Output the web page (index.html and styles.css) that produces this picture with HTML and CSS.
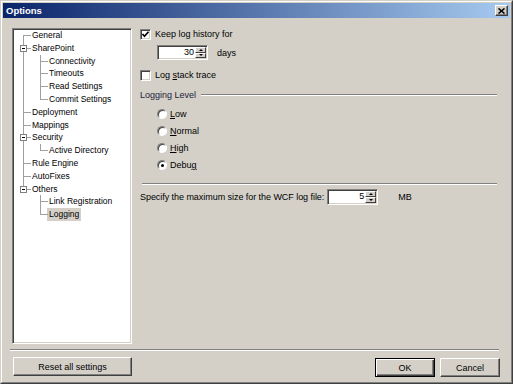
FILE: index.html
```html
<!DOCTYPE html>
<html lang="en">
<head>
  <meta charset="UTF-8">
  <title>Options</title>
  <link rel="stylesheet" href="styles.css">
</head>
<body>
  <div class="window">
    <div class="frame">
      <div class="titlebar">
        <span>Options</span>
        <span class="close">
          <svg width="7" height="6" viewBox="0 0 7 6"><path d="M0.5 0.5 L6.5 5.5 M6.5 0.5 L0.5 5.5" stroke="#000" stroke-width="1.6"/></svg>
        </span>
      </div>

      <div class="client">
        <div class="main">
          <!-- Settings tree -->
          <div class="tree">
            <ul>
              <li><div class="row">General</div></li>
              <li>
                <div class="row"><span class="toggle"></span>SharePoint</div>
                <ul>
                  <li><div class="row">Connectivity</div></li>
                  <li><div class="row">Timeouts</div></li>
                  <li><div class="row">Read Settings</div></li>
                  <li><div class="row">Commit Settings</div></li>
                </ul>
              </li>
              <li><div class="row">Deployment</div></li>
              <li><div class="row">Mappings</div></li>
              <li>
                <div class="row"><span class="toggle"></span>Security</div>
                <ul>
                  <li><div class="row">Active Directory</div></li>
                </ul>
              </li>
              <li><div class="row">Rule Engine</div></li>
              <li><div class="row">AutoFixes</div></li>
              <li>
                <div class="row"><span class="toggle"></span>Others</div>
                <ul>
                  <li><div class="row">Link Registration</div></li>
                  <li><div class="row selected"><span class="label">Logging</span></div></li>
                </ul>
              </li>
            </ul>
          </div>

          <!-- Logging page -->
          <div class="panel">
            <div class="check-row">
              <span class="checkbox">
                <svg width="9" height="9" viewBox="0 0 9 9"><path d="M1.5 4 L3.5 6.2 L7.5 1.8" fill="none" stroke="#000" stroke-width="1.7"/></svg>
              </span>
              <span>Keep log history for</span>
            </div>

            <div class="spin-row">
              <div class="spinner">
                <span class="value">30</span>
                <span class="spin-buttons">
                  <span class="spin-btn up"></span>
                  <span class="spin-btn down"></span>
                </span>
              </div>
              <span>days</span>
            </div>

            <div class="check-row stack">
              <span class="checkbox"></span>
              <span>Log <u>s</u>tack trace</span>
            </div>

            <div class="group-label">Logging Level</div>

            <div class="radio-row first"><span class="radio"></span><span><u>L</u>ow</span></div>
            <div class="radio-row"><span class="radio"></span><span><u>N</u>ormal</span></div>
            <div class="radio-row"><span class="radio"></span><span><u>H</u>igh</span></div>
            <div class="radio-row"><span class="radio checked"></span><span>Debu<u>g</u></span></div>

            <div class="sep"></div>

            <div class="wcf-row">
              <span>Specify the maximum size for the WCF log file:</span>
              <div class="spinner">
                <span class="value">5</span>
                <span class="spin-buttons">
                  <span class="spin-btn up"></span>
                  <span class="spin-btn down"></span>
                </span>
              </div>
              <span class="unit">MB</span>
            </div>
          </div>
        </div>

        <div class="bottom-sep"></div>

        <div class="buttons">
          <button class="btn reset" type="button">Reset all settings</button>
          <span class="spacer"></span>
          <button class="btn default" type="button">OK</button>
          <button class="btn" type="button">Cancel</button>
        </div>
      </div>
    </div>
  </div>
</body>
</html>
```

FILE: styles.css
```css
/* General Styles */
body {
  margin: 0;
  background-color: #d4d0c8;
  font-family: "Liberation Sans", Arial, sans-serif;
  font-size: 9px;
  color: #000;
}

.window {
  width: 513px;
  height: 384px;
  box-sizing: border-box;
  border: 1px solid;
  border-color: #d4d0c8 #404040 #404040 #d4d0c8;
}

.frame {
  height: 100%;
  box-sizing: border-box;
  border: 1px solid;
  border-color: #fff #808080 #808080 #fff;
  padding: 1px;
  display: flex;
  flex-direction: column;
}

/* Title bar */
.titlebar {
  height: 15px;
  flex: none;
  background: linear-gradient(to right, #0a246a, #a6caf0);
  display: flex;
  align-items: center;
  justify-content: space-between;
  padding: 0 2px 0 3px;
  color: #fff;
  font-weight: bold;
  font-size: 9.5px;
}

.close {
  width: 13px;
  height: 11px;
  box-sizing: border-box;
  background-color: #d4d0c8;
  border: 1px solid;
  border-color: #fff #404040 #404040 #fff;
  box-shadow: inset -1px -1px #808080;
  display: flex;
  align-items: center;
  justify-content: center;
}

.close svg {
  display: block;
}

/* Client area */
.client {
  flex: 1;
  display: flex;
  flex-direction: column;
  padding: 10px 9px 0 9px;
}

.main {
  display: flex;
  gap: 8px;
  height: 316px;
}

/* Tree */
.tree {
  width: 120px;
  flex: none;
  box-sizing: border-box;
  background-color: #fff;
  border: 1px solid;
  border-color: #808080 #fff #fff #808080;
  box-shadow: inset 1px 1px #404040, inset -1px -1px #d4d0c8;
  padding: 0 0 0 1px;
  font-size: 8.5px;
}

.tree ul {
  list-style: none;
  margin: 0;
  padding: 0;
}

.tree ul ul {
  margin-left: 17px;
}

.tree li {
  position: relative;
}

.tree li::before {
  content: "";
  position: absolute;
  left: 9px;
  top: 0;
  bottom: 0;
  border-left: 1px solid #a0a0a0;
}

.tree > ul > li:first-child::before {
  top: 6px;
}

.tree li:last-child::before {
  bottom: auto;
  height: 7px;
}

.row {
  position: relative;
  height: 12.8px;
  line-height: 12.8px;
  padding-left: 18px;
  white-space: nowrap;
}

.row::before {
  content: "";
  position: absolute;
  left: 10px;
  top: 6px;
  width: 7px;
  border-top: 1px solid #a0a0a0;
}

.toggle {
  position: absolute;
  left: 6px;
  top: 3px;
  width: 7px;
  height: 7px;
  box-sizing: border-box;
  border: 1px solid #808080;
  background-color: #fff;
  z-index: 1;
}

.toggle::after {
  content: "";
  position: absolute;
  left: 1px;
  top: 2px;
  width: 3px;
  height: 1px;
  background-color: #000;
}

.selected .label {
  display: inline-block;
  background-color: #d4d0c8;
  padding: 0 2px;
  margin-left: -2px;
}

/* Panel */
.panel {
  flex: 1;
  padding-right: 4px;
  display: flex;
  flex-direction: column;
}

.check-row {
  display: flex;
  align-items: center;
  gap: 4px;
  height: 12px;
}

.check-row.stack {
  margin-top: 9px;
}

.checkbox {
  width: 11px;
  height: 11px;
  box-sizing: border-box;
  background-color: #fff;
  border: 1px solid;
  border-color: #808080 #fff #fff #808080;
  box-shadow: inset 1px 1px #404040, inset -1px -1px #d4d0c8;
  display: flex;
  align-items: center;
  justify-content: center;
}

.checkbox svg {
  display: block;
}

.spin-row {
  display: flex;
  align-items: center;
  gap: 9px;
  margin: 5px 0 0 17px;
}

.spinner {
  width: 51px;
  height: 15px;
  box-sizing: border-box;
  display: flex;
  background-color: #fff;
  border: 1px solid;
  border-color: #808080 #fff #fff #808080;
  box-shadow: inset 1px 1px #404040, inset -1px -1px #d4d0c8;
  padding: 1px;
}

.spinner .value {
  flex: 1;
  text-align: right;
  line-height: 11px;
  padding-right: 1px;
}

.spin-buttons {
  width: 11px;
  display: flex;
  flex-direction: column;
}

.spin-btn {
  flex: 1;
  box-sizing: border-box;
  background-color: #d4d0c8;
  border: 1px solid;
  border-color: #fff #404040 #404040 #fff;
  display: flex;
  align-items: center;
  justify-content: center;
}

.spin-btn::after {
  content: "";
  border-left: 2px solid transparent;
  border-right: 2px solid transparent;
}

.spin-btn.up::after {
  border-bottom: 2px solid #000;
}

.spin-btn.down::after {
  border-top: 2px solid #000;
}

.group-label {
  display: flex;
  align-items: center;
  gap: 5px;
  height: 12px;
  margin-top: 8px;
  color: #1c1c3c;
}

.group-label::after {
  content: "";
  flex: 1;
  border-top: 1px solid #808080;
  border-bottom: 1px solid #fff;
}

.radio-row {
  display: flex;
  align-items: center;
  gap: 3px;
  height: 12px;
  margin: 5px 0 0 17px;
}

.radio-row.first {
  margin-top: 7px;
}

.radio {
  position: relative;
  width: 10px;
  height: 10px;
  box-sizing: border-box;
  border-radius: 50%;
  background-color: #fff;
  border: 1px solid;
  border-color: #808080 #fff #fff #808080;
  box-shadow: inset 1px 1px #404040;
}

.radio.checked::after {
  content: "";
  position: absolute;
  left: 2.5px;
  top: 2.5px;
  width: 3px;
  height: 3px;
  border-radius: 50%;
  background-color: #000;
}

.sep {
  margin: 12px 0 0 2px;
  border-top: 1px solid #808080;
  border-bottom: 1px solid #fff;
}

.wcf-row {
  display: flex;
  align-items: center;
  gap: 3px;
  margin-top: 4px;
  letter-spacing: -0.05px;
}

.wcf-row .spinner {
  height: 16px;
}

.wcf-row .unit {
  margin-left: 17px;
}

/* Bottom buttons */
.bottom-sep {
  margin: 5px 2px 0 -2px;
  border-top: 1px solid #808080;
  border-bottom: 1px solid #fff;
}

.buttons {
  display: flex;
  gap: 5px;
  margin: 6px 1px 0 1px;
}

.spacer {
  flex: 1;
}

.btn {
  height: 19px;
  width: 60px;
  box-sizing: border-box;
  padding: 0;
  background-color: #d4d0c8;
  border: 1px solid;
  border-color: #fff #404040 #404040 #fff;
  box-shadow: inset -1px -1px #808080;
  font-family: inherit;
  font-size: 9px;
  color: #000;
}

.btn.reset {
  width: 119px;
}

.btn.default {
  margin-top: 1px;
  border-color: #000;
  box-shadow: inset 1px 1px #fff, inset -1px -1px #404040, inset -2px -2px #808080;
}

.btn.default + .btn {
  margin-top: 1px;
}
```
